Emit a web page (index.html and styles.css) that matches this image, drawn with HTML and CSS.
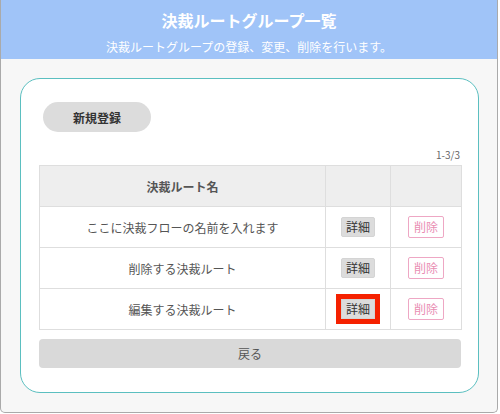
FILE: index.html
```html
<!DOCTYPE html>
<html lang="ja">
<head>
<meta charset="utf-8">
<title>決裁ルートグループ一覧</title>
<link rel="stylesheet" href="styles.css">
</head>
<body>
<div class="frame">
  <header class="header">
    <h1 class="title">決裁ルートグループ一覧</h1>
    <p class="subtitle">決裁ルートグループの登録、変更、削除を行います。</p>
  </header>
  <main class="card">
    <button class="btn-new">新規登録</button>
    <div class="count">1-3/3</div>
    <table class="routes">
      <thead>
        <tr><th class="c-name">決裁ルート名</th><th class="c-detail"></th><th class="c-del"></th></tr>
      </thead>
      <tbody>
        <tr><td>ここに決裁フローの名前を入れます</td><td><button class="btn-detail">詳細</button></td><td><button class="btn-del">削除</button></td></tr>
        <tr><td>削除する決裁ルート</td><td><button class="btn-detail">詳細</button></td><td><button class="btn-del">削除</button></td></tr>
        <tr><td>編集する決裁ルート</td><td><button class="btn-detail is-focus">詳細</button></td><td><button class="btn-del">削除</button></td></tr>
      </tbody>
    </table>
    <button class="btn-back">戻る</button>
  </main>
</div>
</body>
</html>
```
FILE: styles.css
```css
* { box-sizing: border-box; }
html, body { margin: 0; padding: 0; background: #ffffff; }
body {
  font-family: "Noto Sans CJK JP", "Noto Sans", sans-serif;
  color: #555;
}
button { font-family: inherit; cursor: pointer; }
.frame {
  width: 498px;
  height: 413px;
  border: 1px solid #aaaaaa;
  border-top: none;
  border-radius: 0 0 5px 5px;
  background: #f7f7f7;
  overflow: hidden;
}
.header {
  height: 59px;
  background: #a0c4f8;
  color: #fff;
  text-align: center;
  padding-top: 8px;
}
.title {
  margin: 0;
  font-size: 16px;
  font-weight: bold;
  line-height: 24px;
}
.subtitle {
  margin: 6px 0 0;
  font-size: 12px;
  line-height: 18px;
}
.card {
  margin: 19px 18px 0 19px;
  height: 315px;
  background: #fff;
  border: 1px solid #5bbfc0;
  border-radius: 20px;
  padding: 23px 18px 0 18px;
  display: flex;
  flex-direction: column;
}
.btn-new {
  align-self: flex-start;
  margin-left: 4px;
  width: 108px;
  height: 30px;
  border: none;
  border-radius: 15px;
  background: #dcdcdc;
  color: #333;
  font-size: 12px;
  font-weight: bold;
  padding: 0;
}
.count {
  margin-top: 16px;
  margin-bottom: 3px;
  text-align: right;
  font-size: 10px;
  line-height: 14px;
  color: #666;
}
.routes {
  width: 422px;
  border-collapse: collapse;
  table-layout: fixed;
}
.routes th, .routes td {
  border: 1px solid #dedede;
  height: 41px;
  padding: 0;
  text-align: center;
  vertical-align: middle;
  font-size: 12px;
}
.routes th {
  background: #eeeeee;
  color: #555;
  font-weight: bold;
}
.routes td { color: #555; }
.c-name { width: 286px; }
.c-detail { width: 65px; }
.c-del { width: 71px; }
.btn-detail {
  width: 34px;
  height: 20px;
  padding: 0;
  border: 1px solid #d4d4d4;
  border-radius: 2px;
  background: #dcdcdc;
  color: #333;
  font-size: 12px;
  line-height: 18px;
  display: inline-block;
  vertical-align: middle;
}
.btn-detail.is-focus {
  border-radius: 0;
  outline: 5px solid #f52100;
  outline-offset: 0;
}
.btn-del {
  width: 36px;
  height: 22px;
  padding: 0;
  border: 1px solid #eea7c4;
  border-radius: 2px;
  background: #fff;
  color: #e98db3;
  font-size: 12px;
  line-height: 20px;
  display: inline-block;
  vertical-align: middle;
}
.btn-back {
  margin-top: 9px;
  width: 422px;
  height: 29px;
  border: none;
  border-radius: 4px;
  background: #d9d9d9;
  color: #555;
  font-size: 12px;
  padding: 0;
}
```
